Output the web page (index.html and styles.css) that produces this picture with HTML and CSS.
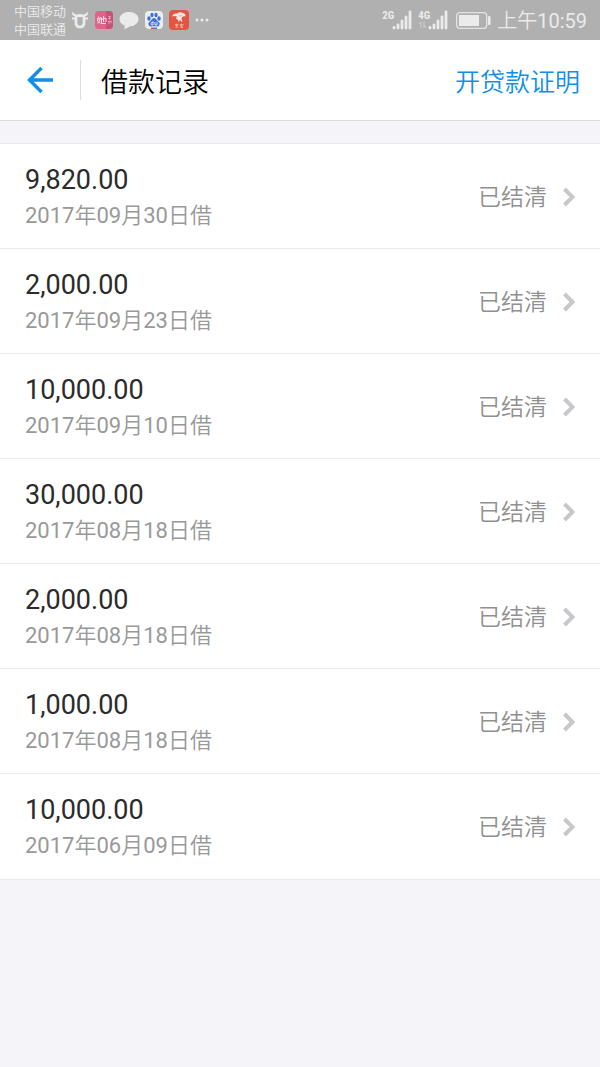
FILE: index.html
```html
<!DOCTYPE html>
<html lang="zh-CN">
<head>
<meta charset="utf-8">
<meta name="viewport" content="width=device-width, initial-scale=1">
<title>借款记录</title>
<link rel="stylesheet" href="styles.css">
</head>
<body>
<div class="status-bar">
  <div class="carriers"><span>中国移动</span><span>中国联通</span></div>
  <div class="notices">
    <svg width="18" height="20" viewBox="0 0 18 20" fill="none" stroke="#ebebeb"><path d="M5 6Q9 5 13 6V13Q13 17 9 17Q5 17 5 13Z" stroke-width="2.800"/><path d="M2 2.500Q1.500 5 5 5.500M16 2.500Q16.500 5 13 5.500M1 8.500H4M14 8.500H17" stroke-width="2"/></svg>
    <svg width="20" height="20" viewBox="0 0 20 20"><rect x="1" y="1" width="18" height="18" rx="4" fill="#df6287"/><path d="M12 1h3a4 4 0 0 1 4 4v10a4 4 0 0 1-4 4h-3Z" fill="#c65278"/><path d="M4.500 6.500Q3.500 10 3.500 11L6.500 13.500M6.500 7Q6 12 3.500 13.500M3 9H6.500M7.500 9.500L12 8V12M9.500 6V12M7.500 7.500V13.500H12" fill="none" stroke="#f8dce5" stroke-width="1"/><path d="M14 6.500h3M14 8.500h3M15.500 6v3.500M14 11.500h3M15 10.500v3.500M17 10.500v3" fill="none" stroke="#eaacbf" stroke-width=".8"/></svg>
    <svg width="20" height="20" viewBox="0 0 20 20"><path d="M10 2C15 2 19.500 4.700 19.500 9S15 16.500 10.500 16.500Q8 18.800 5 18.800Q6.300 17 5.500 15.500Q.5 13.500.5 9C.5 4.700 5 2 10 2Z" fill="#ebebeb"/></svg>
    <svg width="20" height="20" viewBox="0 0 20 20"><rect x="1" y="1" width="18" height="18" rx="4" fill="#ececee"/><g fill="#3d70dc"><ellipse cx="5" cy="8.500" rx="1.700" ry="2.200"/><ellipse cx="8" cy="5" rx="1.600" ry="2.200"/><ellipse cx="12" cy="5" rx="1.600" ry="2.200"/><ellipse cx="15" cy="8.500" rx="1.700" ry="2.200"/><path d="M10 8Q12 8 13 10.500Q16 12.500 15.500 14.500Q15 17 12 16.300H8Q5 17 4.500 14.500Q4 12.500 7 10.500Q8 8 10 8Z"/></g><path d="M9 11V15H7.500Q6.500 14 7.500 12.500H9M11 12V15H13V12" fill="none" stroke="#ececee" stroke-width=".9"/><path d="M7 18.300H10" stroke="#d94a49" stroke-width="1.400"/><path d="M10 18.300H13" stroke="#3d70dc" stroke-width="1.400"/></svg>
    <svg width="20" height="20" viewBox="0 0 20 20"><rect width="20" height="20" rx="4" fill="#e15640"/><path d="M3 6.500Q4 3 8 3.500Q11 1.500 14 3Q17 3.500 16.500 6.500Q14.500 6 13 7L12.500 8.500L13.500 11.500H12L11 9.500L10 12L8.500 9.500L7 8.500L8 6.500Q5 5.500 3 6.500Z" fill="#f4e9e4"/><path d="M9.500 5.800Q11.500 6.500 13 5" stroke="#b7a09c" fill="none" stroke-width=".8"/><path d="M6 14.500H9.500M7.700 13.500V18M6.500 15.500H9M6.200 17.500L7 16.500M9.500 17.500L8.500 16.500M11 14.500H14.500M12.500 13.500L11 16H14.500M12.800 15.500V18M11.500 17.500H14" stroke="#f2c1b7" fill="none" stroke-width=".7"/></svg>
    <svg class="more" width="16" height="20" viewBox="0 0 16 20" fill="#ebebeb"><circle cx="3" cy="10" r="1.500"/><circle cx="8" cy="10" r="1.500"/><circle cx="13" cy="10" r="1.500"/></svg>
  </div>
  <div class="system">
    <div class="signal"><span>2G</span><svg width="20" height="20" viewBox="0 0 20 20" stroke="#ebebeb" stroke-width="2.800" stroke-linecap="round"><path d="M2 17.500V18M6 18V15M10 18V11M14 18V7M18 18V2"/></svg></div>
    <div class="signal"><span>4G</span><svg class="data" width="8" height="8" viewBox="0 0 8 8" fill="none" stroke="#cfcfcf"><path d="M0 3L2 1V7M5 1V7L7 5"/></svg><svg width="20" height="20" viewBox="0 0 20 20" stroke="#ebebeb" stroke-width="2.800" stroke-linecap="round"><path d="M2 17.500V18M6 18V15M10 18V11M14 18V7M18 18V2"/></svg></div>
    <svg class="battery" width="35" height="17" viewBox="0 0 35 17"><rect x=".7" y=".7" width="30" height="15.600" rx="3" fill="none" stroke="#e2e2e2" stroke-width="1.300"/><rect x="3" y="3" width="20" height="11" fill="#ebebeb"/><rect x="32" y="4" width="2.500" height="9" rx="1" fill="#ebebeb"/></svg>
    <time class="clock">上午10:59</time>
  </div>
</div>
<header class="header">
  <button class="back" type="button" aria-label="返回"><svg width="28" height="28" viewBox="0 0 28 28" fill="none" stroke="#108ee9" stroke-width="3.400"><path d="M15.500 2L3.500 14L15.500 26M3 14H27"/></svg></button>
  <h1 class="title">借款记录</h1>
  <a class="proof" href="#">开贷款证明</a>
</header>
<main>
  <ul class="records">
    <li><a class="record" href="#"><span class="info"><span class="amount">9,820.00</span><span class="date">2017年09月30日借</span></span><span class="state">已结清</span><svg class="chevron" width="12" height="20" viewBox="0 0 12 20"><path d="M1.500 2L9.500 10L1.500 18"/></svg></a></li>
    <li><a class="record" href="#"><span class="info"><span class="amount">2,000.00</span><span class="date">2017年09月23日借</span></span><span class="state">已结清</span><svg class="chevron" width="12" height="20" viewBox="0 0 12 20"><path d="M1.500 2L9.500 10L1.500 18"/></svg></a></li>
    <li><a class="record" href="#"><span class="info"><span class="amount">10,000.00</span><span class="date">2017年09月10日借</span></span><span class="state">已结清</span><svg class="chevron" width="12" height="20" viewBox="0 0 12 20"><path d="M1.500 2L9.500 10L1.500 18"/></svg></a></li>
    <li><a class="record" href="#"><span class="info"><span class="amount">30,000.00</span><span class="date">2017年08月18日借</span></span><span class="state">已结清</span><svg class="chevron" width="12" height="20" viewBox="0 0 12 20"><path d="M1.500 2L9.500 10L1.500 18"/></svg></a></li>
    <li><a class="record" href="#"><span class="info"><span class="amount">2,000.00</span><span class="date">2017年08月18日借</span></span><span class="state">已结清</span><svg class="chevron" width="12" height="20" viewBox="0 0 12 20"><path d="M1.500 2L9.500 10L1.500 18"/></svg></a></li>
    <li><a class="record" href="#"><span class="info"><span class="amount">1,000.00</span><span class="date">2017年08月18日借</span></span><span class="state">已结清</span><svg class="chevron" width="12" height="20" viewBox="0 0 12 20"><path d="M1.500 2L9.500 10L1.500 18"/></svg></a></li>
    <li><a class="record" href="#"><span class="info"><span class="amount">10,000.00</span><span class="date">2017年06月09日借</span></span><span class="state">已结清</span><svg class="chevron" width="12" height="20" viewBox="0 0 12 20"><path d="M1.500 2L9.500 10L1.500 18"/></svg></a></li>
  </ul>
</main>
</body>
</html>
```
FILE: styles.css
```css
* { box-sizing: border-box; }
body {
  margin: 0;
  background: #f4f4f9;
  font-family: Roboto, "Noto Sans CJK SC DemiLight", "Noto Sans CJK SC", sans-serif;
}
svg { display: block; flex: none; }
a { text-decoration: none; }

.status-bar {
  display: flex;
  align-items: center;
  height: 40px;
  padding: 0 13px 0 14px;
  background: #b0b0b0;
  color: #ebebeb;
}
.carriers {
  display: flex;
  flex-direction: column;
  padding-top: 2px;
  font-size: 13px;
  line-height: 18px;
  font-weight: 350;
}
.notices { display: flex; align-items: center; gap: 5px; margin-left: 5px; }
.system { display: flex; align-items: center; margin-left: auto; }
.signal { position: relative; display: flex; justify-content: flex-end; width: 30px; margin-right: 6px; }
.signal span {
  position: absolute;
  left: 0;
  top: 0;
  font: 700 11px/11px "Roboto Condensed", Roboto, sans-serif;
}
.data { position: absolute; left: 1px; bottom: 1px; }
.battery { margin: 0 6px 0 2px; }
.clock { padding-top: 2px; font-size: 20px; line-height: 38px; font-weight: 400; }

.header {
  display: flex;
  align-items: center;
  height: 81px;
  padding: 0 20px 0 0;
  background: #fff;
  border-bottom: 1px solid #dcdce0;
}
.back {
  display: flex;
  align-items: center;
  justify-content: center;
  width: 81px;
  height: 40px;
  padding: 0;
  border: 0;
  border-right: 1px solid #dddde1;
  background: none;
}
.title {
  flex: 1;
  margin: 0 0 0 20px;
  padding-top: 6px;
  color: #000;
  font-size: 27px;
  line-height: 40px;
  font-weight: 350;
}
.proof { padding-top: 6px; color: #108ee9; font-size: 25px; line-height: 40px; font-weight: 350; }

.records {
  margin: 22px 0 0;
  padding: 0;
  list-style: none;
  background: #fff;
  border-top: 1px solid #e9e9ed;
}
.records li { border-bottom: 1px solid #eaeaed; }
.records li:last-child { padding-bottom: 1px; }
.record { display: flex; align-items: center; padding: 18px 25px 14px; }
.info { display: flex; flex: 1; flex-direction: column; }
.amount { color: #2b2b2b; font-size: 27px; line-height: 36px; }
.date { color: #999; font-size: 22px; line-height: 36px; font-weight: 400; }
.state { margin-right: 16px; color: #909090; font-size: 23px; line-height: 36px; font-weight: 350; }
.chevron { margin-bottom: 2px; fill: none; stroke: #c7c7cc; stroke-width: 4; }
```
